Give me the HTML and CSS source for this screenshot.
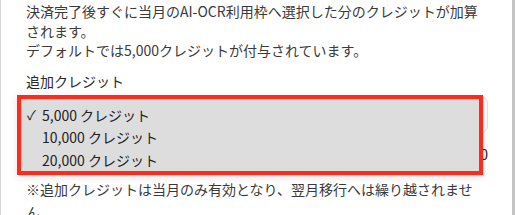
FILE: index.html
```html
<!DOCTYPE html>
<html lang="ja">
<head>
<meta charset="utf-8">
<link rel="stylesheet" href="styles.css">
</head>
<body>
<div class="frame">
  <div class="content">
    <p class="desc">決済完了後すぐに当月のAI-OCR利用枠へ選択した分のクレジットが加算されます。<br>デフォルトでは5,000クレジットが付与されています。</p>
    <div class="label">追加クレジット</div>
    <div class="field">
      <div class="select">
        <span class="select-value">5,000 クレジット</span>
        <span class="chevron"></span>
      </div>
      <ul class="menu">
        <li class="option"><span class="check">✓</span>5,000 クレジット</li>
        <li class="option"><span class="check"></span>10,000 クレジット</li>
        <li class="option"><span class="check"></span>20,000 クレジット</li>
      </ul>
    </div>
    <div class="price">合計 ¥5,000</div>
    <p class="note">※追加クレジットは当月のみ有効となり、翌月移行へは繰り越されません。</p>
  </div>
</div>
</body>
</html>
```
FILE: styles.css
```css
html, body {
  margin: 0;
  padding: 0;
  background: #ffffff;
}
body {
  width: 515px;
  height: 215px;
  overflow: hidden;
  font-family: "Noto Sans CJK JP", "Noto Sans", sans-serif;
  color: #3a3a3a;
  font-size: 14px;
}
.frame {
  box-sizing: border-box;
  width: 515px;
  height: 215px;
  border-left: 1px solid #d6d6d6;
  border-right: 3px solid #c4c4c4;
  overflow: hidden;
}
.content {
  width: 462px;
  padding: 2px 0 0 25px;
}
.desc {
  margin: 0;
  line-height: 19.5px;
}
.label {
  margin-top: 10px;
  line-height: 20px;
  color: #2a2a2a;
}
.field {
  position: relative;
  margin-top: 5px;
}
.select {
  box-sizing: border-box;
  height: 37px;
  border: 1px solid #e3e3e3;
  border-radius: 7px;
  display: flex;
  align-items: center;
  justify-content: space-between;
  padding: 0 4px 0 12px;
  color: #222;
}
.chevron {
  width: 2px;
  height: 2px;
  background: #777;
  border-radius: 1px;
}
.menu {
  position: absolute;
  left: -9px;
  top: -1px;
  width: 466px;
  box-sizing: border-box;
  margin: 0;
  padding: 5px 0 0 6px;
  height: 80px;
  list-style: none;
  background: #dddddd;
  border: 4px solid #ff2a1c;
  box-shadow: 0 2px 8px rgba(0,0,0,0.12);
}
.option {
  height: 22.5px;
  line-height: 22.5px;
  display: flex;
  align-items: center;
  color: #222222;
}
.check {
  width: 15px;
  font-size: 13px;
  flex: none;
}
.price {
  margin-top: 11px;
  text-align: right;
  line-height: 20px;
  color: #222;
}
.note {
  margin: 14px 0 0;
  line-height: 23px;
}
```
